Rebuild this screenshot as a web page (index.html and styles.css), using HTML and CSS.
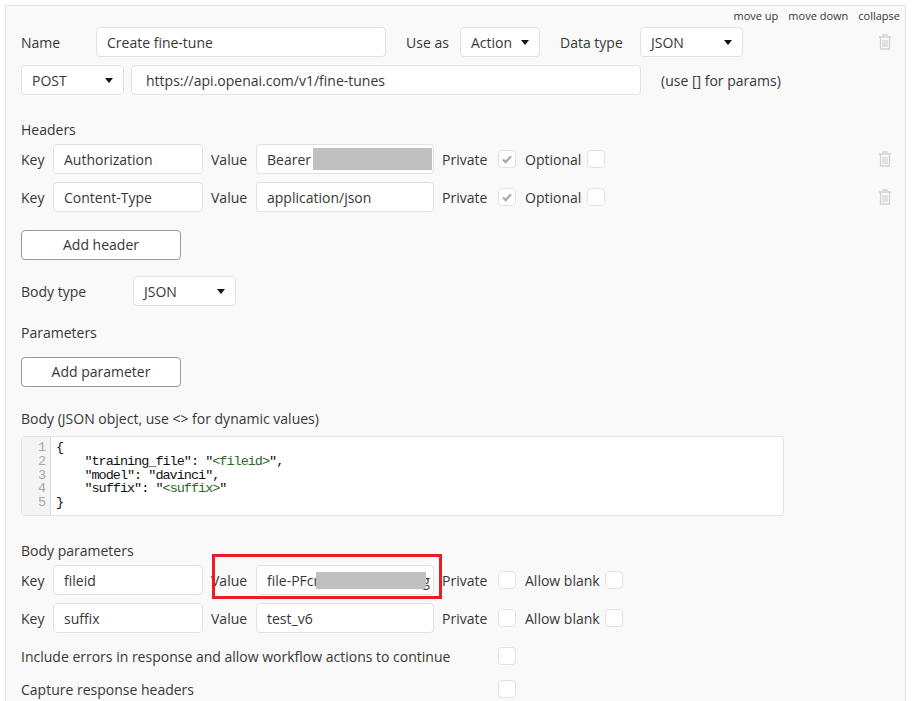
FILE: index.html
```html
<!DOCTYPE html>
<html lang="en">
<head>
    <meta charset="UTF-8">
    <title>API call editor</title>
    <link rel="stylesheet" href="styles.css">
</head>
<body>
    <svg class="defs" width="0" height="0">
        <symbol id="trash" viewBox="0 0 14 16">
            <path d="M5 2V1h4v1M1 3h12M2.500 3.500V15h9V3.500" fill="none" stroke="currentColor" stroke-width="1.300"/>
            <path d="M5 6v7M7 6v7M9 6v7" fill="none" stroke="currentColor" stroke-width="1.200"/>
        </symbol>
        <symbol id="tick" viewBox="0 0 18 18">
            <path d="M4.500 9.500l3 3 6-6.500" fill="none" stroke="currentColor" stroke-width="2.600"/>
        </symbol>
    </svg>
    <div class="panel">
        <div class="links">
            <span>move up</span>
            <span>move down</span>
            <span>collapse</span>
        </div>

        <div class="row row-name">
            <span class="lbl w-name">Name</span>
            <div class="field w-title">Create fine-tune</div>
            <span class="lbl ml-20 w-useas">Use as</span>
            <div class="select w-action">Action</div>
            <span class="lbl ml-20 w-datatype">Data type</span>
            <div class="select w-json">JSON</div>
            <svg class="trash trash-top"><use href="#trash"/></svg>
        </div>

        <div class="row row-url">
            <div class="select w-post">POST</div>
            <div class="field w-url">https://api.openai.com/v1/fine-tunes</div>
            <span class="lbl ml-20">(use [] for params)</span>
        </div>

        <div class="heading h-headers">Headers</div>
        <div class="row row-first">
            <span class="lbl w-key">Key</span>
            <div class="field w-keyfield">Authorization</div>
            <span class="lbl w-value">Value</span>
            <div class="field w-valuefield">Bearer<span class="redact redact-bearer"></span></div>
            <span class="lbl w-private">Private</span>
            <span class="check"><svg><use href="#tick"/></svg></span>
            <span class="lbl w-optional">Optional</span>
            <span class="check"></span>
            <svg class="trash trash-row"><use href="#trash"/></svg>
        </div>
        <div class="row mt-8">
            <span class="lbl w-key">Key</span>
            <div class="field w-keyfield">Content-Type</div>
            <span class="lbl w-value">Value</span>
            <div class="field w-valuefield">application/json</div>
            <span class="lbl w-private">Private</span>
            <span class="check"><svg><use href="#tick"/></svg></span>
            <span class="lbl w-optional">Optional</span>
            <span class="check"></span>
            <svg class="trash trash-row"><use href="#trash"/></svg>
        </div>

        <div class="button add-header">Add header</div>

        <div class="row body-type">
            <span class="lbl w-bodytype">Body type</span>
            <div class="select w-json">JSON</div>
        </div>

        <div class="heading h-params">Parameters</div>
        <div class="button add-param">Add parameter</div>

        <div class="heading h-body">Body (JSON object, use &lt;&gt; for dynamic values)</div>
        <div class="code">
            <div class="gutter">1<br>2<br>3<br>4<br>5</div>
            <pre class="source">{
    "training_file": "<span class="dyn">&lt;fileid&gt;</span>",
    "model": "davinci",
    "suffix": "<span class="dyn">&lt;suffix&gt;</span>"
}</pre>
        </div>

        <div class="heading h-bodyparams">Body parameters</div>
        <div class="row highlight-row">
            <span class="lbl w-key">Key</span>
            <div class="field w-keyfield">fileid</div>
            <span class="lbl w-value">Value</span>
            <div class="field w-valuefield nowrap">file-PFcr<span class="filler"></span>g<span class="redact redact-file"></span></div>
            <span class="lbl w-private">Private</span>
            <span class="check"></span>
            <span class="lbl w-blank">Allow blank</span>
            <span class="check"></span>
            <div class="red-box"></div>
        </div>
        <div class="row mt-8">
            <span class="lbl w-key">Key</span>
            <div class="field w-keyfield">suffix</div>
            <span class="lbl w-value">Value</span>
            <div class="field w-valuefield">test_v6</div>
            <span class="lbl w-private">Private</span>
            <span class="check"></span>
            <span class="lbl w-blank">Allow blank</span>
            <span class="check"></span>
        </div>

        <div class="row option opt-first">
            <span class="lbl w-option">Include errors in response and allow workflow actions to continue</span>
            <span class="check"></span>
        </div>
        <div class="row option opt-second">
            <span class="lbl w-option">Capture response headers</span>
            <span class="check"></span>
        </div>
    </div>
</body>
</html>
```

FILE: styles.css
```css
html, body {
    height: 701px;
    margin: 0;
    overflow: hidden;
}
body {
    padding: 5px 6px 0 5px;
    box-sizing: border-box;
    background-color: #fff;
    font-family: "Open Sans", sans-serif;
    font-size: 14px;
    color: #373737;
}
.defs {
    position: absolute;
}
.panel {
    height: 696px;
    box-sizing: border-box;
    padding: 0 0 0 15px;
    background-color: #f9f9f9;
    border: 1px solid #e4e4e4;
    border-bottom: 0;
    overflow: hidden;
}
.links {
    display: flex;
    justify-content: flex-end;
    gap: 10px;
    height: 21px;
    padding: 3px 5px 0 0;
    box-sizing: border-box;
    font-size: 11px;
    line-height: 14px;
}
.row {
    display: flex;
    align-items: center;
    height: 30px;
    position: relative;
}
.lbl {
    flex: none;
    white-space: nowrap;
}
.field, .select, .button {
    flex: none;
    height: 30px;
    box-sizing: border-box;
    background-color: #fff;
    border: 1px solid #e2e2e2;
    border-radius: 4px;
    line-height: 30px;
}
.field {
    padding-left: 10px;
    position: relative;
    white-space: nowrap;
    overflow: hidden;
}
.select {
    padding-left: 10px;
    position: relative;
}
.select::after {
    content: "";
    position: absolute;
    right: 10px;
    top: 12px;
    border-left: 4px solid transparent;
    border-right: 4px solid transparent;
    border-top: 5px solid #111;
}
.button {
    width: 160px;
    text-align: center;
    border-color: #999;
    line-height: 28px;
}
.check {
    flex: none;
    display: block;
    width: 18px;
    height: 18px;
    box-sizing: border-box;
    background-color: #fff;
    border: 1px solid #e2e2e2;
    border-radius: 4px;
    color: #a9a9a9;
}
.check svg {
    display: block;
    width: 16px;
    height: 16px;
}
.trash {
    position: absolute;
    width: 14px;
    height: 16px;
    color: #d2d2d2;
}
.trash-top {
    left: 857px;
    top: 7px;
}
.trash-row {
    left: 857px;
    top: 7px;
}
.redact {
    position: absolute;
    background-color: #c0c0c0;
}
.redact-bearer {
    left: 56px;
    top: 3px;
    width: 119px;
    height: 22px;
}
.redact-file {
    left: 59px;
    top: 6px;
    width: 110px;
    height: 17px;
}
.filler {
    display: inline-block;
    width: 103px;
}
.red-box {
    position: absolute;
    left: 191px;
    top: -11px;
    width: 230px;
    height: 45px;
    box-sizing: border-box;
    border: 3px solid #ed1c24;
}

/* widths and gaps */
.ml-20 { margin-left: 20px; }
.mt-8 { margin-top: 8px; }
.w-name { width: 75px; }
.w-title { width: 290px; }
.w-useas { width: 54px; }
.w-action { width: 80px; }
.w-datatype { width: 80px; }
.w-json { width: 103px; }
.w-post { width: 103px; }
.w-url { width: 510px; margin-left: 7px; padding-left: 14px; }
.w-key { width: 32px; }
.w-keyfield { width: 150px; }
.w-value { width: 45px; margin-left: 8px; }
.w-valuefield { width: 178px; }
.w-private { width: 56px; margin-left: 8px; }
.w-optional { width: 62px; margin-left: 9px; }
.w-blank { width: 80px; margin-left: 9px; }
.w-bodytype { width: 112px; }
.w-option { width: 477px; }

/* vertical spacing */
.row-name { margin-top: 0; }
.row-url { margin-top: 8px; }
.row-first { margin-top: 4px; }
.heading {
    height: 20px;
    line-height: 20px;
}
.h-headers { margin-top: 25px; }
.add-header { margin-top: 18px; }
.body-type { margin-top: 16px; }
.h-params { margin-top: 17px; }
.add-param { margin-top: 14px; }
.h-body { margin-top: 22px; }
.code {
    display: flex;
    width: 763px;
    height: 80px;
    margin-top: 7px;
    box-sizing: border-box;
    background-color: #fff;
    border: 1px solid #e2e2e2;
    border-radius: 4px;
    overflow: hidden;
    font-family: "Liberation Mono", monospace;
    font-size: 13.5px;
    letter-spacing: -1px;
    line-height: 13.8px;
}
.gutter {
    width: 29px;
    box-sizing: border-box;
    padding: 4px 5px 0 0;
    text-align: right;
    background-color: #f4f4f4;
    color: #aaa;
    border-right: 1px solid #ddd;
    margin-right: 5px;
    flex: none;
}
.source {
    margin: 0;
    padding-top: 4px;
    font: inherit;
    color: #111;
}
.dyn {
    color: #2a6a2a;
}
.h-bodyparams { margin-top: 25px; }
.highlight-row { margin-top: 4px; }
.option { height: 18px; }
.opt-first { margin-top: 14px; }
.opt-second { margin-top: 15px; }
```
